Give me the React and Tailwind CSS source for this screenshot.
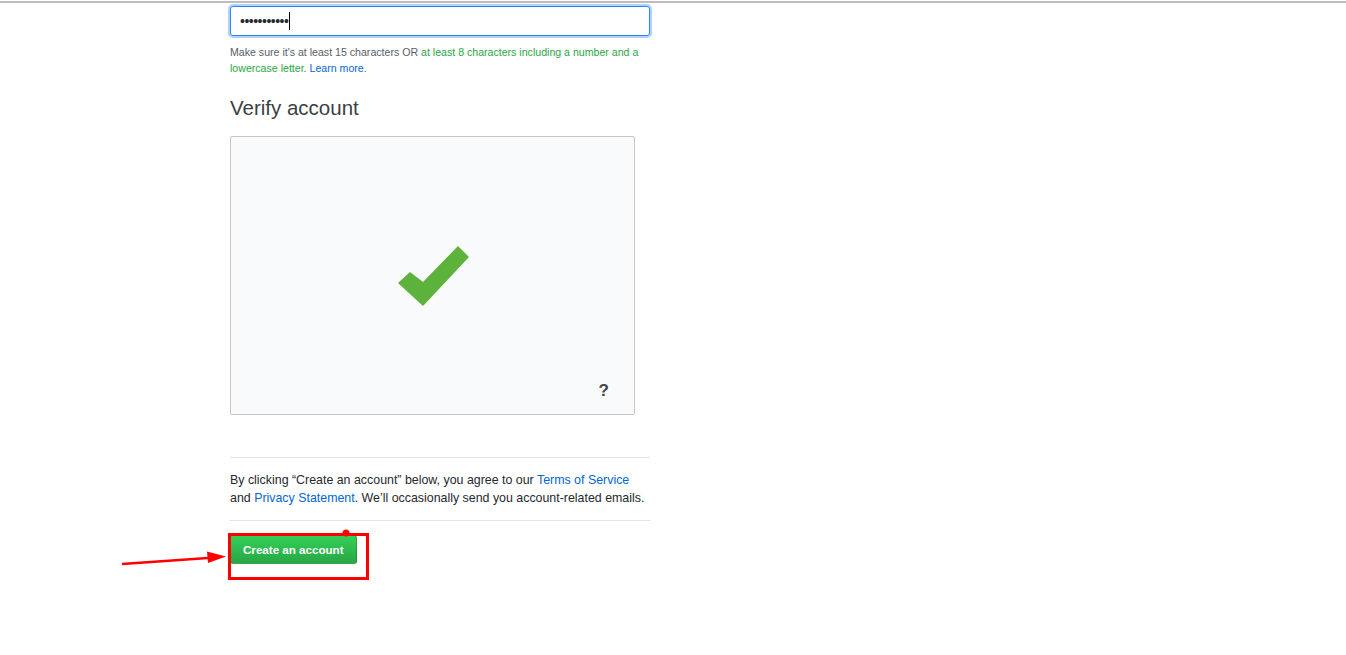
const CheckMark = () => (
  <svg width="74" height="64" viewBox="0 0 74 64">
    <polygon points="0,37 12,26 25,36 60,0 71,11 25,60" fill="#5cb23a" />
  </svg>
);

const Annotation = () => (
  <svg
    className="absolute left-0 top-0 pointer-events-none"
    width="1346"
    height="655"
    viewBox="0 0 1346 655"
  >
    <line x1="122" y1="564" x2="208" y2="558" stroke="#ff0000" strokeWidth="2.5" />
    <polygon points="226,556.5 207,551.5 208,563" fill="#ff0000" />
    <rect x="229.5" y="534.5" width="138" height="44" fill="none" stroke="#ff0000" strokeWidth="3" />
    <circle cx="346" cy="533" r="3.5" fill="#ff0000" />
  </svg>
);

export default function App() {
  return (
    <div
      className="relative w-[1346px] h-[655px] bg-white overflow-hidden text-[#24292e]"
      style={{ fontFamily: '"Liberation Sans", Arial, sans-serif' }}
    >
      <div className="h-[2px] bg-[#bdbdbd] mt-px" />
      <div className="ml-[230px] w-[420px] pt-[3px]">
        <div className="h-[30px] border border-[#2188ff] rounded-[3px] shadow-[0_0_0_2px_rgba(3,102,214,0.3)] flex items-center pl-[9px]">
          <span className="text-[14px] tracking-[-0.5px] leading-none">•••••••••••</span>
          <span className="w-px h-[18px] bg-black ml-[1px]" />
        </div>
        <p className="mt-[8px] text-[10.6px] leading-[16px] text-[#586069]">
          Make sure it's at least 15 characters OR{' '}
          <span className="text-[#28a745]">at least 8 characters including a number and a lowercase letter</span>.{' '}
          <a className="text-[#0366d6]">Learn more</a>.
        </p>
        <h2 className="mt-[19px] text-[20.5px] leading-[26px] text-[#3a3f44]">Verify account</h2>
        <div className="mt-[15px] w-[405px] h-[279px] bg-[#f9fafb] border border-[#c6c6c6] rounded-[2px] relative flex items-center justify-center">
          <div className="mt-[4px] ml-[4px]">
            <CheckMark />
          </div>
          <span className="absolute right-[25px] bottom-[11px] text-[17px] font-bold text-[#444]">?</span>
        </div>
        <div className="mt-[42px] border-t border-[#e1e4e8] pt-[13px] pb-[13px] text-[12.4px] leading-[18px]">
          By clicking “Create an account” below, you agree to our{' '}
          <a className="text-[#0366d6]">Terms of Service</a> and{' '}
          <a className="text-[#0366d6]">Privacy Statement</a>. We’ll occasionally send you account-related emails.
        </div>
        <div className="border-t border-[#e1e4e8] pt-[14px]">
          <button className="h-[29px] px-[12px] rounded-[3px] text-white text-[11.6px] font-bold bg-gradient-to-b from-[#34d058] to-[#28a745] border border-[rgba(27,31,35,0.2)]">
            Create an account
          </button>
        </div>
      </div>
      <Annotation />
    </div>
  );
}
